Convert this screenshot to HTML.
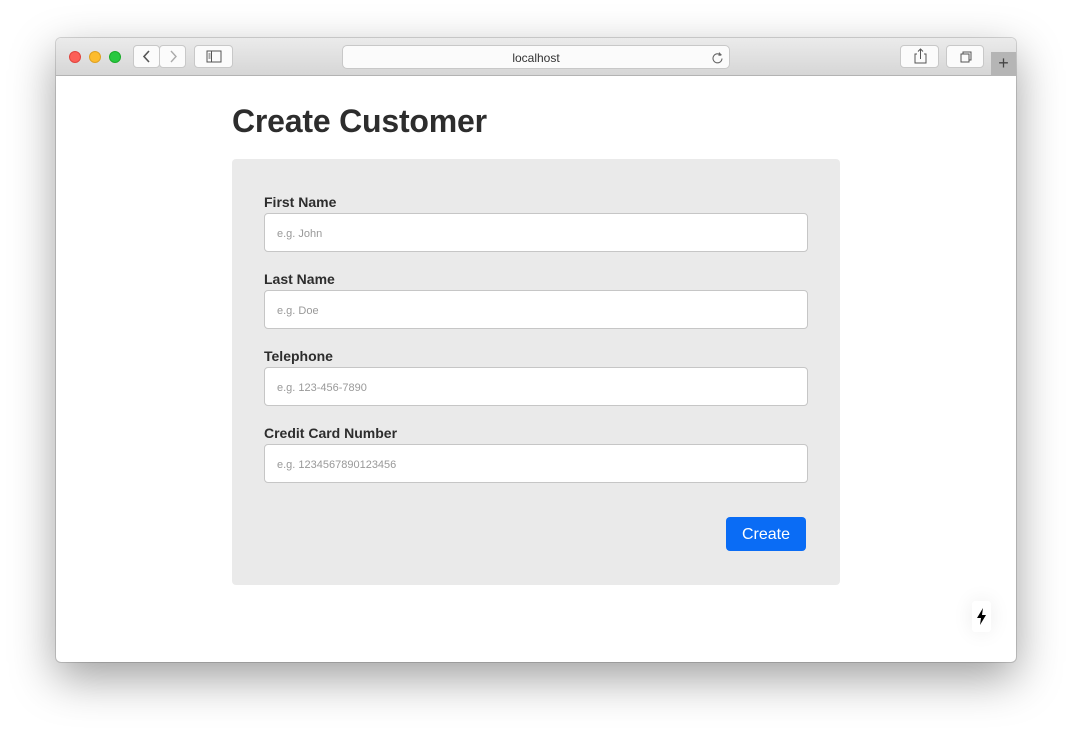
<!DOCTYPE html>
<html><head><style>
*{box-sizing:border-box;margin:0;padding:0}
body{width:1072px;height:736px;background:#fff;font-family:"Liberation Sans",sans-serif;position:relative;overflow:hidden}
.win{position:absolute;left:56px;top:38px;width:960px;height:624px;border-radius:5px;background:#fff;box-shadow:0 16px 45px rgba(0,0,0,.38),0 0 0 1px rgba(0,0,0,.15);overflow:hidden}
.bar{position:absolute;left:0;top:0;width:960px;height:38px;background:linear-gradient(#ebebeb,#d6d6d6);border-bottom:1px solid #b3b3b3}
.dot{position:absolute;top:13px;width:12px;height:12px;border-radius:50%}
.btn{position:absolute;top:7px;height:23px;background:#fbfbfb;border:1px solid #c8c8c8;border-radius:4px}
.url{position:absolute;left:286px;top:7px;width:388px;height:24px;background:#fbfbfb;border:1px solid #c8c8c8;border-radius:5px;text-align:center;font-size:12px;line-height:24px;color:#333}
.plus{position:absolute;left:935px;top:14px;width:25px;height:24px;background:#b5b5b5;color:#444;font-size:18px;text-align:center;line-height:23px}
h1{position:absolute;left:232px;top:103px;font-size:32px;font-weight:bold;color:#2d2d2d;letter-spacing:-.2px}
.card{position:absolute;left:232px;top:159px;width:608px;height:426px;background:#eaeaea;border-radius:4px}
.lab{position:absolute;left:32px;font-size:14px;font-weight:bold;color:#2d2d2d}
.inp{position:absolute;left:32px;width:544px;height:39px;background:#fff;border:1px solid #c6c6c6;border-radius:4px;font-size:11px;color:#999;padding-left:12px;line-height:40px}
.create{position:absolute;left:494px;top:358px;width:80px;height:34px;background:#0a6cf5;border-radius:4px;color:#fff;font-size:16px;text-align:center;line-height:35px}
.bolt{position:absolute;left:972px;top:601px;width:19px;height:31px;background:#fff;border-radius:3px;box-shadow:0 0 20px rgba(0,0,0,.08)}
</style></head><body>
<div class="win">
<div class="bar">
<div class="dot" style="left:13px;background:#fc5f57;border:1px solid #e0443e"></div>
<div class="dot" style="left:33px;background:#fdbc2e;border:1px solid #dea123"></div>
<div class="dot" style="left:53px;background:#28c840;border:1px solid #1aab29"></div>
<div class="btn" style="left:77px;width:27px"><svg width="27" height="21"><path d="M15 5l-5 5.5 5 5.5" stroke="#555" stroke-width="1.6" fill="none"/></svg></div>
<div class="btn" style="left:103px;width:27px"><svg width="27" height="21"><path d="M11 5l5 5.5-5 5.5" stroke="#aaa" stroke-width="1.4" fill="none"/></svg></div>
<div class="btn" style="left:138px;width:39px"><svg width="39" height="21"><rect x="12" y="5" width="14" height="11" stroke="#555" fill="none"/><path d="M16.5 5v11M13.5 8h2M13.5 10h2M13.5 12h2" stroke="#555"/></svg></div>
<div class="url">localhost<svg style="position:absolute;right:5px;top:5px" width="13" height="13"><path d="M10 4.5A4.5 4.5 0 1 0 11 7.5" stroke="#666" fill="none" stroke-width="1.1"/><path d="M8 1l3 3-3.5 1z" fill="#666"/></svg></div>
<div class="btn" style="left:844px;width:39px"><svg width="39" height="21"><path d="M16 8h-2v9h11v-9h-2M19.5 13V3M17 5.5l2.5-2.5 2.5 2.5" stroke="#555" fill="none"/></svg></div>
<div class="btn" style="left:890px;width:38px"><svg width="38" height="21"><rect x="14" y="8" width="8" height="8" stroke="#555" fill="none"/><path d="M16 8V6h8v8h-2" stroke="#555" fill="none"/></svg></div>
<div class="plus">+</div>
</div>
</div>
<h1>Create Customer</h1>
<div class="card">
<div class="lab" style="top:35px">First Name</div><div class="inp" style="top:54px">e.g. John</div>
<div class="lab" style="top:112px">Last Name</div><div class="inp" style="top:131px">e.g. Doe</div>
<div class="lab" style="top:189px">Telephone</div><div class="inp" style="top:208px">e.g. 123-456-7890</div>
<div class="lab" style="top:266px">Credit Card Number</div><div class="inp" style="top:285px">e.g. 1234567890123456</div>
<div class="create">Create</div>
</div>
<div class="bolt"><svg width="19" height="31"><path d="M11 7L5 17h4l-1 7 6-10h-4z" fill="#000"/></svg></div>
</body></html>
